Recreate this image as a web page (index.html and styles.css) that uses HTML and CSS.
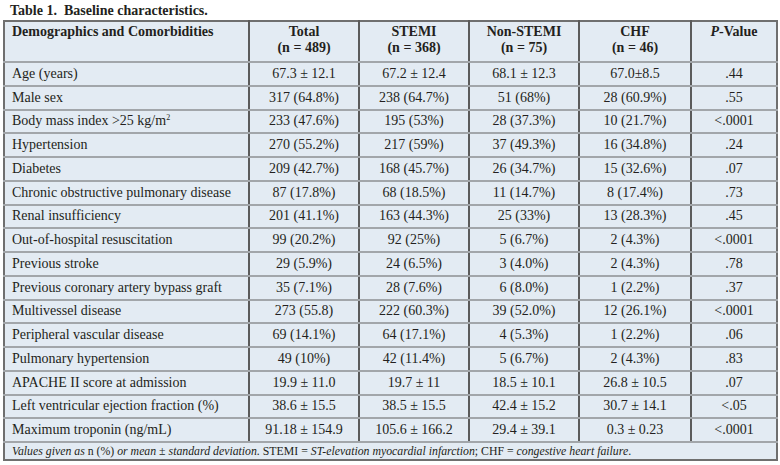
FILE: index.html
```html
<!DOCTYPE html>
<html>
<head>
<meta charset="utf-8">
<link rel="stylesheet" href="styles.css">
</head>
<body>
<div class="title">Table 1.&nbsp; Baseline characteristics.</div>
<table class="tbl">
  <colgroup>
    <col class="c0"><col class="c1"><col class="c2"><col class="c3"><col class="c4"><col class="c5">
  </colgroup>
  <thead>
    <tr>
      <th class="lbl">Demographics and Comorbidities</th>
      <th>Total<br>(n = 489)</th>
      <th>STEMI<br>(n = 368)</th>
      <th>Non-STEMI<br>(n = 75)</th>
      <th>CHF<br>(n = 46)</th>
      <th><i>P</i>-Value</th>
    </tr>
  </thead>
  <tbody>
    <tr><td>Age (years)</td><td>67.3 ± 12.1</td><td>67.2 ± 12.4</td><td>68.1 ± 12.3</td><td>67.0±8.5</td><td>.44</td></tr>
    <tr><td>Male sex</td><td>317 (64.8%)</td><td>238 (64.7%)</td><td>51 (68%)</td><td>28 (60.9%)</td><td>.55</td></tr>
    <tr><td>Body mass index &gt;25 kg/m<sup>2</sup></td><td>233 (47.6%)</td><td>195 (53%)</td><td>28 (37.3%)</td><td>10 (21.7%)</td><td>&lt;.0001</td></tr>
    <tr><td>Hypertension</td><td>270 (55.2%)</td><td>217 (59%)</td><td>37 (49.3%)</td><td>16 (34.8%)</td><td>.24</td></tr>
    <tr><td>Diabetes</td><td>209 (42.7%)</td><td>168 (45.7%)</td><td>26 (34.7%)</td><td>15 (32.6%)</td><td>.07</td></tr>
    <tr><td>Chronic obstructive pulmonary disease</td><td>87 (17.8%)</td><td>68 (18.5%)</td><td>11 (14.7%)</td><td>8 (17.4%)</td><td>.73</td></tr>
    <tr><td>Renal insufficiency</td><td>201 (41.1%)</td><td>163 (44.3%)</td><td>25 (33%)</td><td>13 (28.3%)</td><td>.45</td></tr>
    <tr><td>Out-of-hospital resuscitation</td><td>99 (20.2%)</td><td>92 (25%)</td><td>5 (6.7%)</td><td>2 (4.3%)</td><td>&lt;.0001</td></tr>
    <tr><td>Previous stroke</td><td>29 (5.9%)</td><td>24 (6.5%)</td><td>3 (4.0%)</td><td>2 (4.3%)</td><td>.78</td></tr>
    <tr><td>Previous coronary artery bypass graft</td><td>35 (7.1%)</td><td>28 (7.6%)</td><td>6 (8.0%)</td><td>1 (2.2%)</td><td>.37</td></tr>
    <tr><td>Multivessel disease</td><td>273 (55.8)</td><td>222 (60.3%)</td><td>39 (52.0%)</td><td>12 (26.1%)</td><td>&lt;.0001</td></tr>
    <tr><td>Peripheral vascular disease</td><td>69 (14.1%)</td><td>64 (17.1%)</td><td>4 (5.3%)</td><td>1 (2.2%)</td><td>.06</td></tr>
    <tr><td>Pulmonary hypertension</td><td>49 (10%)</td><td>42 (11.4%)</td><td>5 (6.7%)</td><td>2 (4.3%)</td><td>.83</td></tr>
    <tr><td>APACHE II score at admission</td><td>19.9 ± 11.0</td><td>19.7 ± 11</td><td>18.5 ± 10.1</td><td>26.8 ± 10.5</td><td>.07</td></tr>
    <tr><td>Left ventricular ejection fraction (%)</td><td>38.6 ± 15.5</td><td>38.5 ± 15.5</td><td>42.4 ± 15.2</td><td>30.7 ± 14.1</td><td>&lt;.05</td></tr>
    <tr><td>Maximum troponin (ng/mL)</td><td>91.18 ± 154.9</td><td>105.6 ± 166.2</td><td>29.4 ± 39.1</td><td>0.3 ± 0.23</td><td>&lt;.0001</td></tr>
    <tr class="note"><td colspan="6"><i>Values given as</i> n (%) <i>or mean</i> ± <i>standard deviation.</i> STEMI = <i>ST-elevation myocardial infarction</i>; CHF = <i>congestive heart failure</i>.</td></tr>
  </tbody>
</table>
</body>
</html>
```
FILE: styles.css
```css
html, body {
  margin: 0;
  padding: 0;
  background: #ffffff;
}
body {
  font-family: "Liberation Serif", "Times New Roman", serif;
  color: #231f20;
  padding: 3px 0 0 3px;
}
.title {
  font-weight: bold;
  font-size: 14px;
  line-height: 16px;
  padding-left: 7px;
  height: 17px;
}
.tbl {
  border-collapse: collapse;
  background: #e3ebf3;
  font-size: 14px;
  border: 2px solid #6f6f6f;
}
.c0 { width: 245px; }
.c1 { width: 110px; }
.c2 { width: 110px; }
.c3 { width: 110px; }
.c4 { width: 112px; }
.c5 { width: 86px; }
.tbl th {
  font-weight: bold;
  text-align: center;
  vertical-align: top;
  line-height: 16px;
  padding: 2px 4px 2px;
  height: 35px;
  border-left: 2px solid #5b5b5b;
  border-bottom: 2px solid #a2a6aa;
}
.tbl th.lbl {
  text-align: left;
  padding-left: 7px;
  border-left: none;
}
.tbl td {
  text-align: center;
  height: 21.75px;
  padding: 0 4px;
  line-height: 16px;
  border-left: 2px solid #5b5b5b;
  border-bottom: 2px solid #a2a6aa;
  white-space: nowrap;
}
.tbl td:first-child {
  text-align: left;
  padding-left: 7px;
  border-left: none;
}
.tbl sup {
  font-size: 8px;
  line-height: 0;
  vertical-align: 5px;
}
.tbl tr.note td {
  font-size: 11.8px;
  height: 16px;
  border-bottom: none;
  text-align: left;
}
```
